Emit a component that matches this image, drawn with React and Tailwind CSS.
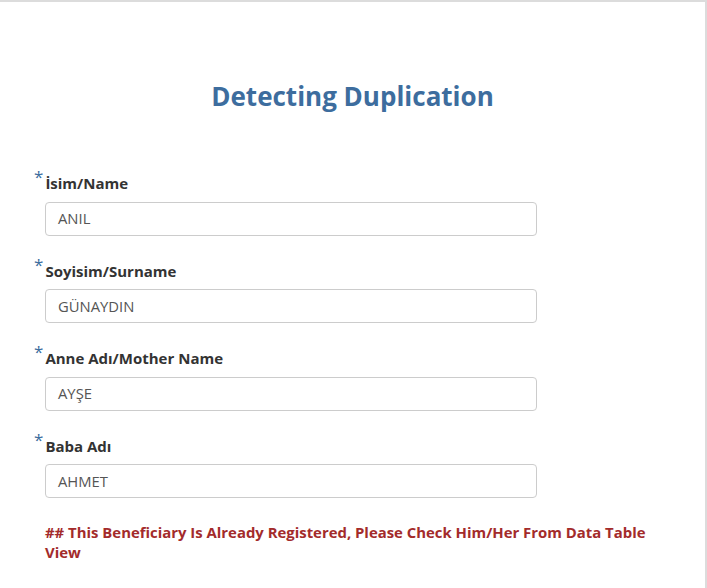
export default function App() {
  // form values, read-only here since the page only shows a duplicate check
  const fields = [
    { label: "İsim/Name", value: "ANIL" },
    { label: "Soyisim/Surname", value: "GÜNAYDIN" },
    { label: "Anne Adı/Mother Name", value: "AYŞE" },
    { label: "Baba Adı", value: "AHMET" },
  ];

  return (
    <div className="min-h-[588px] w-full border-t-2 border-r-2 border-[#dcdcdc] bg-white font-['Open_Sans',sans-serif]">
      <h1 className="pt-[76px] text-center text-[26px] leading-[36px] font-bold text-[#3d6d9e]">
        Detecting Duplication
      </h1>

      <div className="mt-[59px] flex flex-col gap-[25px]">
        {fields.map((f) => (
          <div key={f.label}>
            <label className="block h-[20px] pl-[34px] text-[15px] leading-[20px] font-bold text-[#333]">
              <span className="relative -top-[6px] mr-[2px] text-[17px] leading-none font-normal text-[#3d6d9e]">*</span>
              {f.label}
            </label>
            <div className="mt-[8.5px] ml-[45px] flex h-[34px] w-[492px] items-center rounded-[4px] border border-[#cccccc] px-[12px] text-[14.8px] text-[#555]">
              {f.value}
            </div>
          </div>
        ))}
      </div>

      <p className="mt-[24px] ml-[45px] w-[625px] text-[14.9px] leading-[20px] font-bold text-[#a32b2b]">
        ## This Beneficiary Is Already Registered, Please Check Him/Her From Data Table View
      </p>
    </div>
  );
}
